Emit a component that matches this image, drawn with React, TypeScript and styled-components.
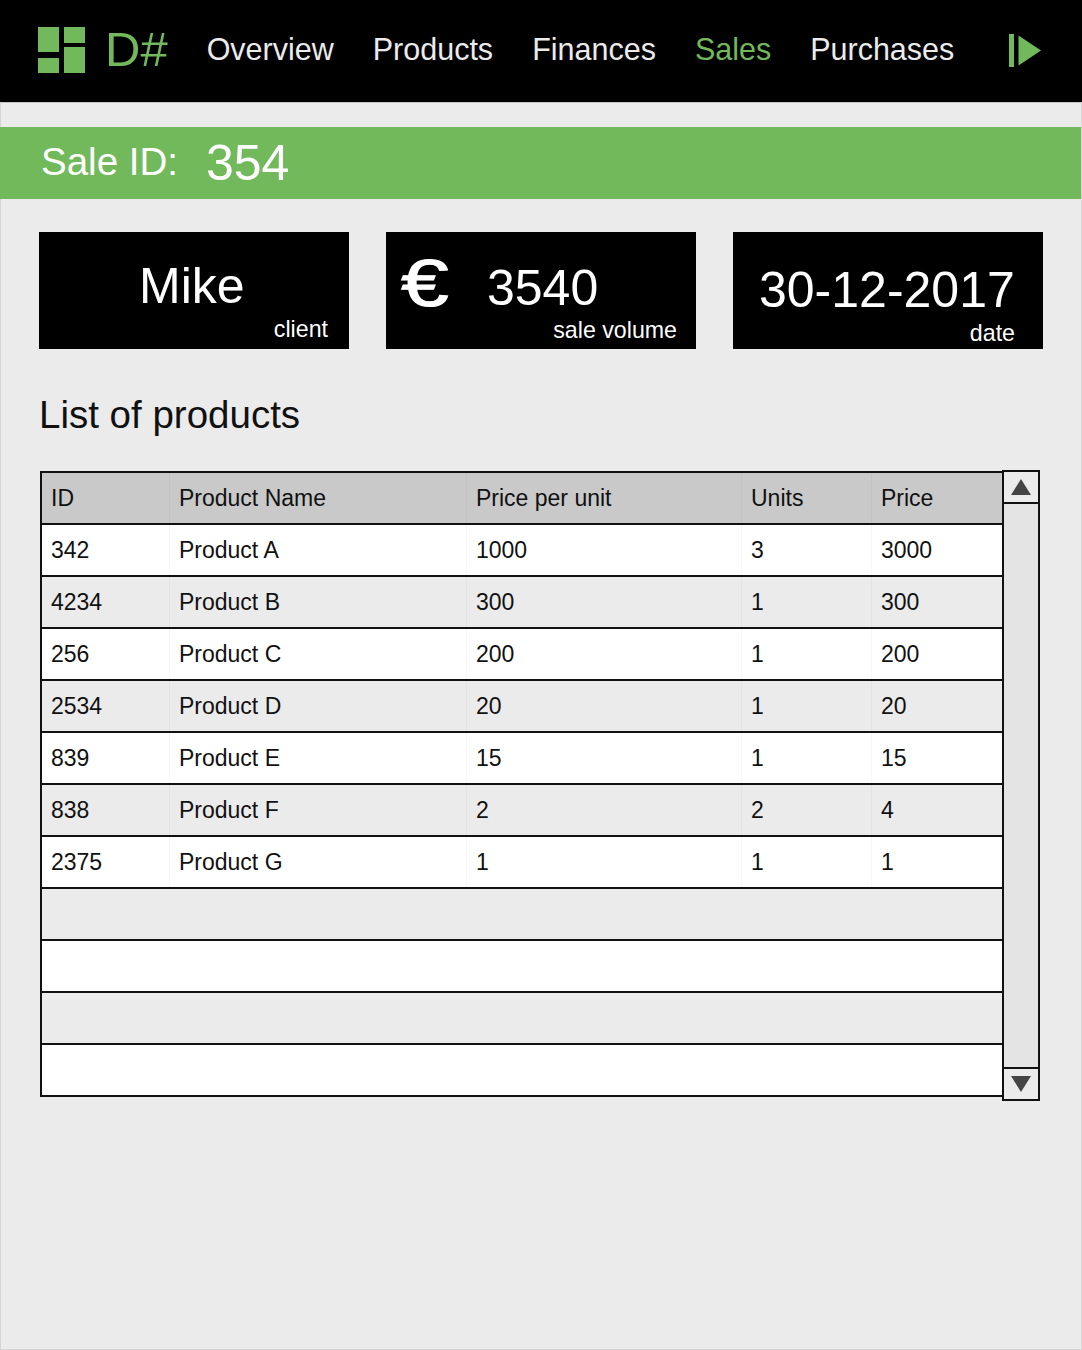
import { createGlobalStyle } from 'styled-components'
import styled from 'styled-components'

const GREEN = '#72b95c'
const PAGE = '#ebebeb'
const INK = '#111'

const Global = createGlobalStyle`
  html, body { margin: 0; padding: 0; background: ${PAGE}; }
  * { box-sizing: border-box; }
  body { font-family: "Liberation Sans", Arial, sans-serif; }
`

const Page = styled.div`
  width: 1082px;
  height: 1350px;
  display: flex;
  flex-direction: column;
  overflow: hidden;
`

const Nav = styled.nav`
  flex: none;
  height: 103px;
  background: #000;
  display: flex;
  align-items: center;
  padding: 0 41px 2px 38px;
  border-bottom: 1px solid #c4c4c4;
`

const Brand = styled.div`
  display: flex;
  align-items: center;
  gap: 20px;
  margin-right: 39px;
`

const BrandName = styled.span`
  color: ${GREEN};
  font-size: 49px;
  line-height: 1;
  margin-bottom: 2px;
`

const NavLinks = styled.div`
  display: flex;
  gap: 39px;
  flex: 1;
  margin-bottom: 1px;
`

const NavLink = styled.a<{ $active?: boolean }>`
  color: ${p => (p.$active ? GREEN : '#ebebeb')};
  font-size: 30.5px;
  line-height: 1;
`

const Body = styled.main`
  flex: 1;
  padding-top: 25px;
  border: solid #d6d6d6;
  border-width: 0 1px 1px 1px;
  margin-top: -1px;
`

const SaleBar = styled.header`
  height: 72px;
  margin-left: -1px;
  background: ${GREEN};
  display: flex;
  align-items: center;
  gap: 28px;
  padding-left: 41px;
  color: #fff;
`

const SaleLabel = styled.span`
  font-size: 38.5px;
  line-height: 1;
  margin-bottom: 2px;
`

const SaleValue = styled.span`
  font-size: 50px;
  line-height: 1;
`

const Cards = styled.section`
  display: grid;
  grid-template-columns: repeat(3, 310px);
  gap: 37px;
  margin: 33px 0 0 38px;
`

const Card = styled.div<{ $capRight: number; $capTop: number; $top: number }>`
  height: 117px;
  background: #000;
  color: #fff;
  display: flex;
  flex-direction: column;
  padding-top: ${p => p.$top}px;

  small {
    display: block;
    font-size: 23.2px;
    line-height: 1;
    text-align: right;
    margin-top: ${p => p.$capTop}px;
    padding-right: ${p => p.$capRight}px;
  }
`

const CardMain = styled.div<{ $left: number }>`
  display: flex;
  align-items: center;
  font-size: 50px;
  line-height: 1;
  padding-left: ${p => p.$left}px;
`

const Euro = styled.span`
  font-size: 66px;
  line-height: 50px;
  width: 86px;
  align-self: flex-start;
  margin-top: -5px;
  display: inline-block;
  transform: scaleX(1.3);
  transform-origin: left center;
  -webkit-text-stroke: 1px #fff;
`

const Heading = styled.h2`
  margin: 45px 0 34px 38px;
  font-size: 38.5px;
  line-height: 42px;
  font-weight: 400;
  color: ${INK};
`

const TableArea = styled.section`
  display: flex;
  align-items: flex-start;
  margin-left: 39px;
`

const Table = styled.div`
  width: 963px;
  margin-top: 1px;
  border-top: 2px solid ${INK};
  border-left: 2px solid ${INK};
`

const Row = styled.div<{ $kind: 'head' | 'odd' | 'even' }>`
  display: grid;
  grid-template-columns: 127px 297px 275px 130px 1fr;
  height: 52px;
  border-bottom: 2px solid ${INK};
  background: ${p => (p.$kind === 'head' ? '#c9c9c9' : p.$kind === 'odd' ? '#fff' : PAGE)};
  color: ${INK};
  font-size: 23px;
`

const Cell = styled.div`
  display: flex;
  align-items: center;
  padding-left: 9px;
  border-left: 1px solid rgba(0, 0, 0, 0.03);
  &:first-child { border-left: none; }
`

const Scrollbar = styled.div`
  width: 38px;
  height: 631px;
  margin-left: -1px;
  border: 2px solid ${INK};
  background: #e4e4e4;
  display: flex;
  flex-direction: column;
  justify-content: space-between;
`

const ScrollButton = styled.div<{ $down?: boolean }>`
  height: 32px;
  background: ${PAGE};
  display: flex;
  align-items: center;
  justify-content: center;
  border-style: solid;
  border-color: ${INK};
  border-width: ${p => (p.$down ? '2px 0 0 0' : '0 0 2px 0')};
  svg { display: block; transform: ${p => (p.$down ? 'rotate(180deg)' : 'none')}; }
`

const Logo = () => (
  <svg width="47" height="46" viewBox="0 0 47 46" fill={GREEN}>
    <rect x="0" y="0" width="21" height="25" />
    <rect x="26" y="0" width="21" height="16" />
    <rect x="0" y="31" width="21" height="15" />
    <rect x="26" y="20" width="21" height="26" />
  </svg>
)

const PlayIcon = () => (
  <svg width="32" height="33" viewBox="0 0 32 33" fill={GREEN}>
    <rect x="0" y="0" width="5" height="33" />
    <polygon points="9.5,1.5 32,16.5 9.5,31.5" />
  </svg>
)

const Arrow = () => (
  <svg width="20" height="16" viewBox="0 0 20 16" fill="#444">
    <polygon points="10,0 20,16 0,16" />
  </svg>
)

const links = ['Overview', 'Products', 'Finances', 'Sales', 'Purchases']

const products = [
  ['342', 'Product A', '1000', '3', '3000'],
  ['4234', 'Product B', '300', '1', '300'],
  ['256', 'Product C', '200', '1', '200'],
  ['2534', 'Product D', '20', '1', '20'],
  ['839', 'Product E', '15', '1', '15'],
  ['838', 'Product F', '2', '2', '4'],
  ['2375', 'Product G', '1', '1', '1'],
  [],
  [],
  [],
  [],
]

export default function App() {
  return (
    <Page>
      <Global />
      <Nav>
        <Brand>
          <Logo />
          <BrandName>D#</BrandName>
        </Brand>
        <NavLinks>
          {links.map(l => (
            <NavLink key={l} $active={l === 'Sales'}>{l}</NavLink>
          ))}
        </NavLinks>
        <PlayIcon />
      </Nav>

      <Body>
        <SaleBar>
          <SaleLabel>Sale ID:</SaleLabel>
          <SaleValue>354</SaleValue>
        </SaleBar>

        <Cards>
          <Card $top={29} $capTop={7} $capRight={21}>
            <CardMain $left={100}>Mike</CardMain>
            <small>client</small>
          </Card>
          <Card $top={31} $capTop={6} $capRight={19}>
            <CardMain $left={15}><Euro>€</Euro>3540</CardMain>
            <small>sale volume</small>
          </Card>
          <Card $top={33} $capTop={7} $capRight={28}>
            <CardMain $left={26}>30-12-2017</CardMain>
            <small>date</small>
          </Card>
        </Cards>

        <Heading>List of products</Heading>

        <TableArea>
          <Table>
            <Row $kind="head">
              {['ID', 'Product Name', 'Price per unit', 'Units', 'Price'].map(h => (
                <Cell key={h}>{h}</Cell>
              ))}
            </Row>
            {products.map((p, i) => (
              <Row key={i} $kind={i % 2 === 0 ? 'odd' : 'even'}>
                {p.map((c, j) => (
                  <Cell key={j}>{c}</Cell>
                ))}
              </Row>
            ))}
          </Table>
          <Scrollbar>
            <ScrollButton><Arrow /></ScrollButton>
            <ScrollButton $down><Arrow /></ScrollButton>
          </Scrollbar>
        </TableArea>
      </Body>
    </Page>
  )
}
